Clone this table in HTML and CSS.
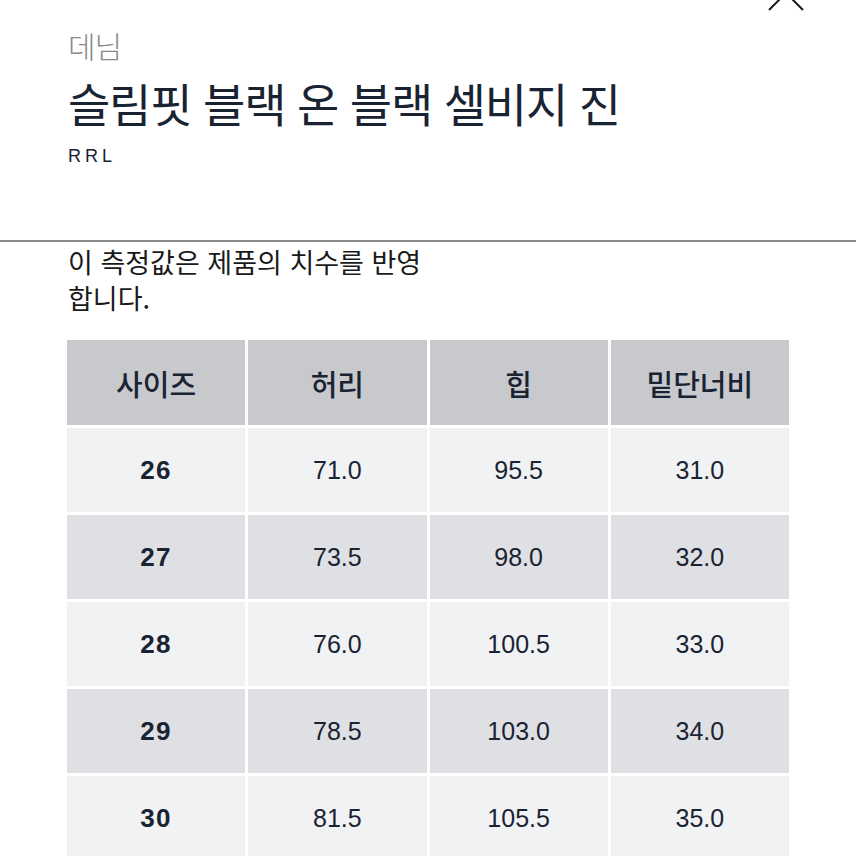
FILE: index.html
```html
<!DOCTYPE html>
<html lang="ko">
<head>
<meta charset="utf-8">
<link rel="stylesheet" href="styles.css">
</head>
<body>
<div class="page">
  <button class="close" aria-label="닫기">
    <svg width="40" height="40" viewBox="0 0 40 40"><path d="M3 3 L37 37 M37 3 L3 37" stroke="#1a1a1a" stroke-width="2" fill="none"/></svg>
  </button>
  <header class="product">
    <div class="cat">데님</div>
    <h1 class="title">슬림핏 블랙 온 블랙 셀비지 진</h1>
    <div class="brand">RRL</div>
  </header>
  <p class="note">이 측정값은 제품의 치수를 반영 합니다.</p>
  <div class="table">
    <div class="cell head">사이즈</div>
    <div class="cell head">허리</div>
    <div class="cell head">힙</div>
    <div class="cell head">밑단너비</div>

    <div class="cell odd size">26</div>
    <div class="cell odd">71.0</div>
    <div class="cell odd">95.5</div>
    <div class="cell odd">31.0</div>

    <div class="cell even size">27</div>
    <div class="cell even">73.5</div>
    <div class="cell even">98.0</div>
    <div class="cell even">32.0</div>

    <div class="cell odd size">28</div>
    <div class="cell odd">76.0</div>
    <div class="cell odd">100.5</div>
    <div class="cell odd">33.0</div>

    <div class="cell even size">29</div>
    <div class="cell even">78.5</div>
    <div class="cell even">103.0</div>
    <div class="cell even">34.0</div>

    <div class="cell odd size">30</div>
    <div class="cell odd">81.5</div>
    <div class="cell odd">105.5</div>
    <div class="cell odd">35.0</div>
  </div>
</div>
</body>
</html>
```

FILE: styles.css
```css
html, body {
  margin: 0;
  padding: 0;
  background: #ffffff;
}
body {
  font-family: "Noto Sans CJK KR", "Noto Sans", sans-serif;
  color: #1a2332;
  overflow: hidden;
}
.page {
  position: relative;
  width: 856px;
  height: 856px;
  overflow: hidden;
}
.close {
  position: absolute;
  left: 766px;
  top: -27px;
  padding: 0;
  border: 0;
  background: none;
  width: 40px;
  height: 40px;
}
.close svg { display: block; }
.product {
  height: 242px;
  box-sizing: border-box;
  padding: 23px 68px 0;
  border-bottom: 2px solid #8a8a8a;
}
.cat {
  font-size: 30px;
  line-height: 44px;
  font-weight: 300;
  color: #8a8a8a;
  letter-spacing: -1px;
}
.title {
  margin: 5px 0 0;
  font-size: 46px;
  line-height: 60px;
  font-weight: 400;
  color: #1a2332;
  letter-spacing: -1.2px;
  white-space: nowrap;
}
.brand {
  margin-top: 14px;
  font-family: "Liberation Sans", Arial, sans-serif;
  font-size: 18px;
  line-height: 20px;
  letter-spacing: 4px;
  color: #1a2332;
}
.note {
  margin: 2px 0 0 68px;
  width: 420px;
  font-size: 27px;
  line-height: 36px;
  color: #1a1a1a;
  word-break: keep-all;
}
.table {
  margin: 24px 0 0 67px;
  width: 722px;
  display: grid;
  grid-template-columns: repeat(4, 1fr);
  grid-auto-rows: 84px;
  grid-template-rows: 85px;
  gap: 3px;
}
.cell {
  display: flex;
  align-items: center;
  justify-content: center;
  font-family: "Liberation Sans", Arial, sans-serif;
  font-size: 25px;
  color: #1a2332;
}
.head {
  background: #c8c9cd;
  font-family: "Noto Sans CJK KR", sans-serif;
  font-size: 29px;
  font-weight: 500;
}
.odd { background: #f0f2f4; }
.even { background: #dfe0e4; }
.size { font-weight: 700; font-size: 26px; letter-spacing: 1.5px; }
```
